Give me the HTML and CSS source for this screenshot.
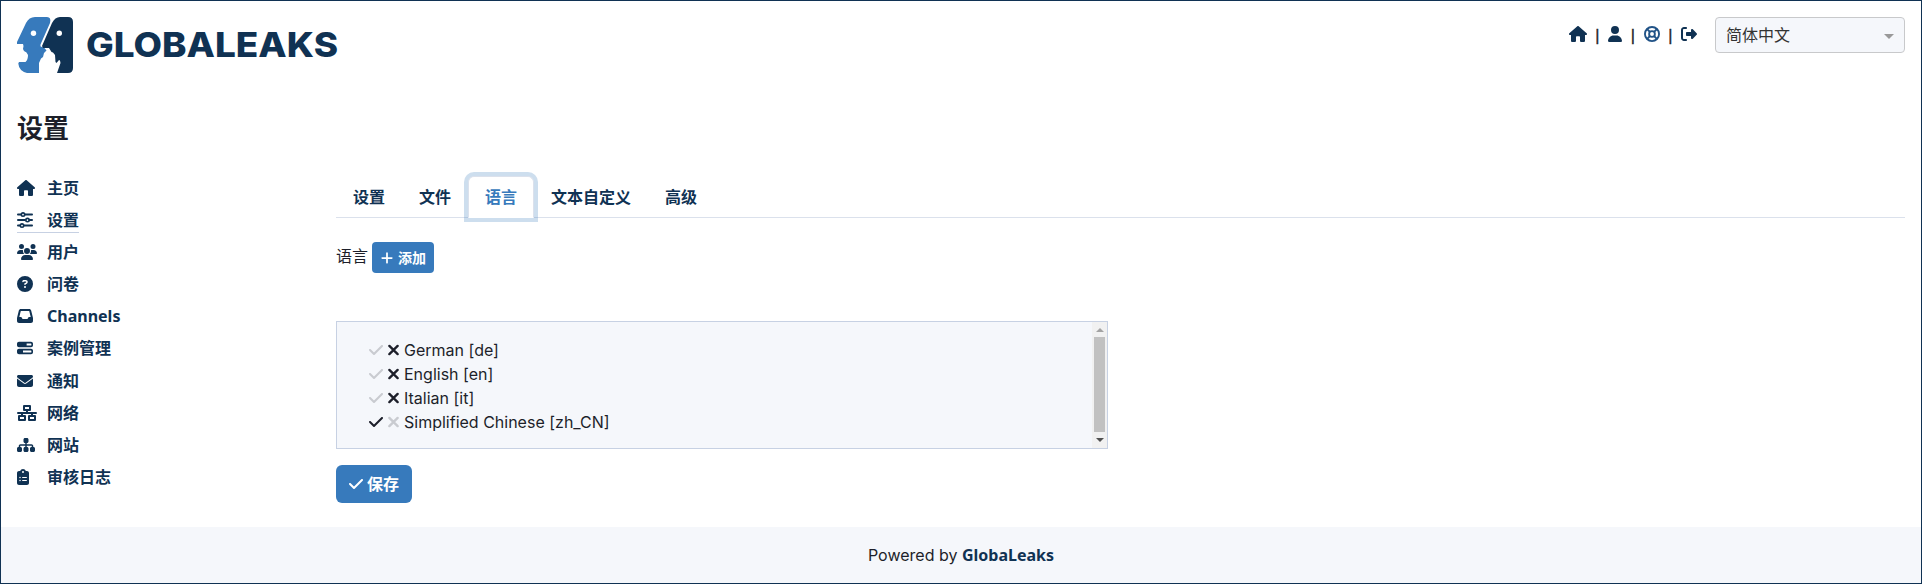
FILE: index.html
```html
<!DOCTYPE html>
<html lang="zh-CN">
<head>
<meta charset="utf-8">
<title>GlobaLeaks</title>
<link rel="stylesheet" href="styles.css">
</head>
<body>
<svg class="sprite" aria-hidden="true">
<symbol id="home" viewBox="0 0 576 512"><path d="M575.8 255.500c0 18-15 32.100-32 32.100h-32l.7 160.200c0 2.700-.2 5.400-.5 8.100V472c0 22.100-17.900 40-40 40H392c-22.100 0-40-17.900-40-40V360c0-17.700-14.300-32-32-32h-64c-17.700 0-32 14.300-32 32v112c0 22.100-17.900 40-40 40h-80c-22.100 0-40-17.900-40-40V287.600H32c-18 0-32-14-32-32.100 0-9 3-17 10-24L266.400 8c7-7 15-8 22-8s15 2 21 7l255.400 224.500c8 7 12 15 11 24z"/></symbol>
<symbol id="user" viewBox="0 0 448 512"><path d="M224 256a128 128 0 1 0 0-256 128 128 0 1 0 0 256zm-45.700 48C79.800 304 0 383.800 0 482.300 0 498.700 13.300 512 29.700 512h388.600c16.400 0 29.700-13.300 29.700-29.700C448 383.800 368.200 304 269.700 304h-91.400z"/></symbol>
<symbol id="ring" viewBox="0 0 512 512"><g fill="none" stroke="currentColor" stroke-width="60"><circle cx="256" cy="256" r="226"/><circle cx="256" cy="256" r="92"/><path d="m94 94 97 97m130 130 97 97M94 418l97-97m130-130 97-97"/></g></symbol>
<symbol id="logout" viewBox="0 0 512 512"><path d="M377.900 105.900 500.700 228.700c7.200 7.200 11.300 17.100 11.300 27.300s-4.100 20.100-11.300 27.300L377.900 406.100c-6.400 6.400-15 9.900-24 9.900-18.700 0-33.900-15.200-33.900-33.900V320H192c-17.700 0-32-14.300-32-32v-64c0-17.700 14.300-32 32-32h128v-62.100c0-18.700 15.200-33.900 33.900-33.900 9 0 17.600 3.600 24 9.900zM160 96H96c-17.700 0-32 14.300-32 32v256c0 17.700 14.300 32 32 32h64c17.700 0 32 14.300 32 32s-14.300 32-32 32H96c-53 0-96-43-96-96V128c0-53 43-96 96-96h64c17.700 0 32 14.300 32 32s-14.300 32-32 32z"/></symbol>
<symbol id="sliders" viewBox="0 0 512 512"><g fill="none" stroke="currentColor" stroke-width="60" stroke-linecap="round"><path d="M30 80h92m144 0h216M30 256h220m144 0h88M30 432h60m144 0h248"/></g><g fill="none" stroke="currentColor" stroke-width="52"><circle cx="192" cy="80" r="54"/><circle cx="336" cy="256" r="54"/><circle cx="160" cy="432" r="54"/></g></symbol>
<symbol id="users" viewBox="0 0 640 512"><path d="M144 0a80 80 0 1 1 0 160 80 80 0 1 1 0-160zm368 0a80 80 0 1 1 0 160 80 80 0 1 1 0-160zM0 298.700C0 239.800 47.800 192 106.700 192h42.700c15.900 0 31 3.500 44.600 9.700-1.300 7.200-1.900 14.700-1.900 22.300 0 38.200 16.800 72.500 43.300 96H21.300C9.600 320 0 310.400 0 298.700zM405.300 320h-.7c26.600-23.500 43.300-57.800 43.300-96 0-7.600-.7-15-1.900-22.300 13.600-6.300 28.700-9.700 44.600-9.700h42.700c58.900 0 106.700 47.800 106.700 106.700 0 11.800-9.600 21.300-21.300 21.300H405.300zM224 224a96 96 0 1 1 192 0 96 96 0 1 1-192 0zm-96 261.300C128 411.700 187.700 352 261.300 352h117.300c73.700 0 133.400 59.700 133.400 133.300 0 14.700-11.900 26.700-26.700 26.700H154.600C139.900 512 128 500.100 128 485.300z"/></symbol>
<symbol id="question" viewBox="0 0 512 512"><path d="M256 512A256 256 0 1 0 256 0a256 256 0 1 0 0 512zm-86.200-346.700c7.900-22.300 29.100-37.300 52.800-37.300h58.300c34.900 0 63.100 28.300 63.100 63.100 0 22.600-12.100 43.500-31.700 54.800L280 264.400c-.2 13-10.900 23.600-24 23.600-13.300 0-24-10.700-24-24v-13.500c0-8.600 4.600-16.500 12.100-20.800l44.300-25.400c4.700-2.700 7.600-7.700 7.600-13.100 0-8.400-6.800-15.100-15.100-15.100h-58.300c-3.400 0-6.400 2.100-7.500 5.300l-.4 1.200c-4.400 12.500-18.200 19-30.600 14.600s-19-18.200-14.600-30.600l.3-1.300zM224 352a32 32 0 1 1 64 0 32 32 0 1 1-64 0z"/></symbol>
<symbol id="inbox" viewBox="0 0 512 512"><path d="M121 32C91.600 32 66 52 58.900 80.500L1.900 308.400C.6 313.500 0 318.700 0 323.900V416c0 35.300 28.700 64 64 64h384c35.300 0 64-28.700 64-64v-92.100c0-5.200-.6-10.400-1.900-15.500l-57-227.900C446 52 420.400 32 391 32H121zm0 64h270l48 192h-51.200c-12.100 0-23.200 6.800-28.600 17.700l-14.300 28.600c-5.400 10.800-16.500 17.700-28.600 17.700H195.800c-12.100 0-23.200-6.800-28.600-17.700l-14.300-28.600c-5.400-10.800-16.500-17.700-28.600-17.700H73L121 96z"/></symbol>
<symbol id="bars" viewBox="0 0 512 512"><path fill-rule="evenodd" d="M64 56h384c35 0 64 29 64 64v48c0 35-29 64-64 64H64c-35 0-64-29-64-64v-48c0-35 29-64 64-64zm244 58v64h136q16 0 16-16v-32q0-16-16-16zM64 280h384c35 0 64 29 64 64v48c0 35-29 64-64 64H64c-35 0-64-29-64-64v-48c0-35 29-64 64-64zm128 58v64h252q16 0 16-16v-32q0-16-16-16z"/></symbol>
<symbol id="mail" viewBox="0 0 512 512"><path d="M48 64C21.500 64 0 85.500 0 112c0 15.100 7.100 29.300 19.200 38.400l217.600 163.200c11.400 8.500 27 8.500 38.400 0l217.600-163.200c12.100-9.100 19.200-23.300 19.200-38.400 0-26.500-21.500-48-48-48H48zM0 176v208c0 35.300 28.700 64 64 64h384c35.300 0 64-28.700 64-64V176L294.400 339.200c-22.800 17.100-54 17.100-76.800 0L0 176z"/></symbol>
<symbol id="net" viewBox="0 0 640 512"><g fill="none" stroke="currentColor" stroke-width="64" stroke-linejoin="round"><rect x="224" y="32" width="192" height="128"/><rect x="64" y="352" width="192" height="128"/><rect x="384" y="352" width="192" height="128"/><path stroke-linecap="round" d="M32 256h576"/><path d="M320 160v96M160 256v96m320-96v96"/></g></symbol>
<symbol id="sitemap" viewBox="0 0 576 512"><path d="M208 80c0-26.500 21.500-48 48-48h64c26.500 0 48 21.500 48 48v64c0 26.500-21.500 48-48 48h-8v40h152c30.900 0 56 25.100 56 56v32h8c26.500 0 48 21.500 48 48v64c0 26.500-21.500 48-48 48h-64c-26.500 0-48-21.500-48-48v-64c0-26.500 21.500-48 48-48h8v-32c0-4.400-3.600-8-8-8H312v40h8c26.500 0 48 21.500 48 48v64c0 26.500-21.500 48-48 48h-64c-26.500 0-48-21.500-48-48v-64c0-26.500 21.500-48 48-48h8v-40H112c-4.400 0-8 3.600-8 8v32h8c26.500 0 48 21.500 48 48v64c0 26.500-21.500 48-48 48H48c-26.500 0-48-21.500-48-48v-64c0-26.500 21.500-48 48-48h8v-32c0-30.900 25.100-56 56-56h152v-40h-8c-26.500 0-48-21.500-48-48V80z"/></symbol>
<symbol id="clip" viewBox="0 0 384 512"><path fill-rule="evenodd" d="M192 0c-41.800 0-77.400 26.700-90.500 64H64C28.700 64 0 92.700 0 128v320c0 35.300 28.700 64 64 64h256c35.300 0 64-28.700 64-64V128c0-35.300-28.700-64-64-64h-37.500C269.400 26.700 233.800 0 192 0zm0 64a32 32 0 1 1 0 64 32 32 0 1 1 0-64zM72 272a24 24 0 1 1 48 0 24 24 0 1 1-48 0zm104-16h128c8.800 0 16 7.200 16 16s-7.200 16-16 16H176c-8.800 0-16-7.200-16-16s7.200-16 16-16zM72 368a24 24 0 1 1 48 0 24 24 0 1 1-48 0zm88 0c0-8.800 7.200-16 16-16h128c8.800 0 16 7.200 16 16s-7.200 16-16 16H176c-8.800 0-16-7.200-16-16z"/></symbol>
<symbol id="check" viewBox="0 0 448 512"><path d="M438.600 105.400c12.500 12.500 12.500 32.800 0 45.300l-256 256c-12.500 12.500-32.800 12.500-45.300 0l-128-128c-12.500-12.500-12.500-32.800 0-45.300s32.800-12.500 45.300 0L160 338.700 393.400 105.400c12.500-12.500 32.800-12.500 45.300 0z"/></symbol>
<symbol id="plus" viewBox="0 0 448 512"><path d="M256 80c0-17.700-14.300-32-32-32s-32 14.300-32 32v144H48c-17.700 0-32 14.300-32 32s14.300 32 32 32h144v144c0 17.700 14.300 32 32 32s32-14.300 32-32V288h144c17.700 0 32-14.300 32-32s-14.300-32-32-32H256V80z"/></symbol>
<symbol id="times" viewBox="0 0 352 512"><path fill="none" stroke="currentColor" stroke-width="74" stroke-linecap="round" d="m44 124 264 264M308 124 44 388"/></symbol>
</svg>
<div class="page">
<header class="header">
  <svg class="logo" viewBox="0 0 322 56" width="322" height="56">
    <path class="light" d="M18 0H30Q34.500 0 33 6L23.500 27.500Q23 30 25 30L27 30.500L29.500 33.500L27 36L26 40L24 41.500L22 46V56H10Q2 54 1.300 46.500L2 45H8.500Q11 43 11 38Q10 35 7 34L6 32L6.500 29L6 27H0V25L9 6Q12 0 18 0Z"/>
    <path class="dark" d="M43 0H51Q56 0 56 5V51Q56 56 51 56H40L43.500 46L43 43.500L42 43L39.500 46L38.500 45L38 38L36 35.500L34.500 35L32 31H26L25 29L35 6Q38 0 43 0Z"/>
    <circle class="eye" cx="16.500" cy="16.300" r="2.700"/><circle class="eye" cx="42.300" cy="16.300" r="2.700"/>
    <text class="wordmark" x="69" y="40" textLength="252" lengthAdjust="spacingAndGlyphs">GLOBALEAKS</text>
  </svg>
  <div class="tools">
    <svg class="icon w18"><use href="#home"/></svg><span class="sep">|</span>
    <svg class="icon w14"><use href="#user"/></svg><span class="sep">|</span>
    <svg class="icon w16 ring"><use href="#ring"/></svg><span class="sep">|</span>
    <svg class="icon w16"><use href="#logout"/></svg>
    <div class="select"><span>简体中文</span><i class="caret"></i></div>
  </div>
</header>
<h1 class="title">设置</h1>
<div class="main">
  <nav class="side">
    <a><svg class="icon w18"><use href="#home"/></svg><span>主页</span></a>
    <a class="current"><svg class="icon w16"><use href="#sliders"/></svg><span>设置</span></a>
    <a><svg class="icon w20"><use href="#users"/></svg><span>用户</span></a>
    <a><svg class="icon w16"><use href="#question"/></svg><span>问卷</span></a>
    <a><svg class="icon w16"><use href="#inbox"/></svg><span>Channels</span></a>
    <a><svg class="icon w16"><use href="#bars"/></svg><span>案例管理</span></a>
    <a><svg class="icon w16"><use href="#mail"/></svg><span>通知</span></a>
    <a><svg class="icon w20"><use href="#net"/></svg><span>网络</span></a>
    <a><svg class="icon w18"><use href="#sitemap"/></svg><span>网站</span></a>
    <a><svg class="icon w12"><use href="#clip"/></svg><span>审核日志</span></a>
  </nav>
  <section class="content">
    <div class="tabs"><a>设置</a><a>文件</a><a class="active">语言</a><a>文本自定义</a><a>高级</a></div>
    <div class="add-row"><span>语言</span><button class="btn small"><svg class="icon w14"><use href="#plus"/></svg>添加</button></div>
    <div class="list">
      <ul class="langs">
        <li><svg class="icon w14 off"><use href="#check"/></svg><svg class="icon w11"><use href="#times"/></svg>German [de]</li>
        <li><svg class="icon w14 off"><use href="#check"/></svg><svg class="icon w11"><use href="#times"/></svg>English [en]</li>
        <li><svg class="icon w14 off"><use href="#check"/></svg><svg class="icon w11"><use href="#times"/></svg>Italian [it]</li>
        <li><svg class="icon w14"><use href="#check"/></svg><svg class="icon w11 off"><use href="#times"/></svg>Simplified Chinese [zh_CN]</li>
      </ul>
      <div class="scroll"><i class="up"></i><i class="thumb"></i><i class="down"></i></div>
    </div>
    <button class="btn save"><svg class="icon w14"><use href="#check"/></svg>保存</button>
  </section>
</div>
<footer class="footer">Powered by&nbsp;<b>GlobaLeaks</b></footer>
</div>
</body>
</html>
```

FILE: styles.css
```css
* { box-sizing: border-box; }
body { margin: 0; background: #fff; color: #1d1f2a; font: 16px/24px Inter, "Noto Sans CJK SC", sans-serif; }
.sprite { display: none; }
.page { height: 584px; border: 1px solid #103253; display: flex; flex-direction: column; overflow: hidden; }
.icon { height: 16px; fill: currentColor; flex: none; display: block; }
.w11 { width: 11px; } .w12 { width: 12px; } .w14 { width: 14px; } .w16 { width: 16px; } .w18 { width: 18px; } .w20 { width: 20px; }
.header { display: flex; justify-content: space-between; align-items: flex-start; padding: 16px 16px 0; height: 72px; }
.logo { display: block; }
.light { fill: #377abc; } .dark { fill: #103253; } .eye { fill: #fff; }
.wordmark { fill: #103253; font: 800 34.500px Inter, sans-serif; }
.tools { display: flex; align-items: center; height: 36px; color: #103253; }
.tools .icon { margin-bottom: 2px; }
.sep { color: #1d1f2a; width: 21.500px; text-align: center; font: 500 16px/24px "Liberation Sans", sans-serif; padding-top: 1px; -webkit-text-stroke: .4px currentColor; }
.ring { color: #215387; }
.select { width: 190px; height: 36px; margin-left: 18px; padding: 0 10px; border: 1px solid #c8c9cb; border-radius: 4px; background: #f5f7fb; color: #333; display: flex; align-items: center; justify-content: space-between; }
.caret { border: 5px solid transparent; border-top-color: #999; border-bottom: 0; margin-top: 2px; }
.title { margin: 39px 0 0 16px; font: 700 26px/32px "Noto Sans", "Noto Sans CJK SC", sans-serif; }
.main { display: flex; padding: 27px 16px 0; height: 383px; }
.side { width: 319px; display: flex; flex-direction: column; align-items: flex-start; gap: 7.100px; padding-top: 5px; color: #103253; font: 700 16px/24px "Noto Sans", "Noto Sans CJK SC", sans-serif; }
.side a { display: flex; align-items: center; height: 25px; border-bottom: 1px solid transparent; }
.side .icon { margin-right: 12px; }
.side .w16 { margin-right: 14px; } .side .w20 { margin-right: 10px; } .side .w12 { margin-right: 18px; }
.side .current { border-color: #c7d1e3; }
.content { flex: 1; display: flex; flex-direction: column; align-items: flex-start; padding-top: 5px; }
.tabs { display: flex; align-self: stretch; height: 42px; border-bottom: 1px solid #dbe1ec; color: #103253; font: 700 16px/24px "Noto Sans", "Noto Sans CJK SC", sans-serif; }
.tabs a { height: 42px; padding: 8px 16px; border: 1px solid transparent; border-radius: 6px 6px 0 0; }
.tabs .active { color: #377abc; background: #fff; border-color: #dbe1ec #dbe1ec #fff; box-shadow: 0 0 0 4px rgba(55,122,188,.25); }
.add-row { display: flex; margin-top: 24px; gap: 4px; }
.add-row > span { line-height: 28px; }
.btn { display: flex; align-items: center; justify-content: center; gap: 4px; border: 0; padding: 0; color: #fff; background: #377abc; font: 700 16px/24px "Noto Sans", "Noto Sans CJK SC", sans-serif; }
.small { width: 62px; height: 31px; border-radius: 4px; font-size: 14px; }
.small .icon { height: 14px; }
.list { display: flex; justify-content: space-between; width: 772px; height: 128px; margin-top: 48px; border: 1px solid #c7d1e3; background: #f5f7fb; }
.langs { list-style: none; margin: 0; padding: 16px 0 0 32px; }
.langs li { display: flex; align-items: center; gap: 5px; height: 24px; }
.off { opacity: .2; }
.scroll { width: 15px; background: #f1f1f1; display: flex; flex-direction: column; align-items: center; }
.up { border: 4px solid transparent; border-top: 0; border-bottom-color: #a3a3a3; margin: 6px 0 5px; }
.thumb { width: 11px; height: 95px; background: #c1c1c1; }
.down { border: 4px solid transparent; border-bottom: 0; border-top-color: #505050; margin-top: 6px; }
.save { width: 76px; height: 38px; margin-top: 16px; border-radius: 6px; }
.footer { margin-top: auto; height: 56px; background: #f5f7fb; display: flex; align-items: center; justify-content: center; }
.footer b { color: #103253; font-family: "Noto Sans", sans-serif; }
```
